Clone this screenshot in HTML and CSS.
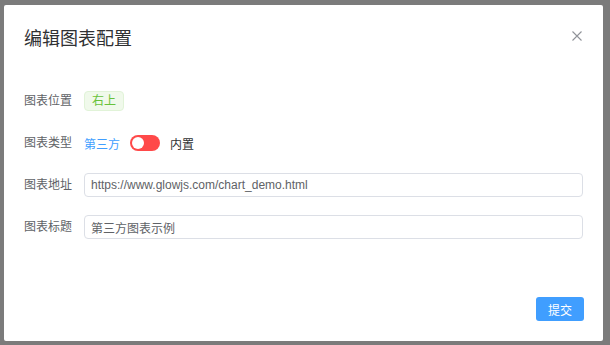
FILE: index.html
```html
<!DOCTYPE html>
<html lang="zh-CN">
<head>
<meta charset="utf-8">
<title>编辑图表配置</title>
<link rel="stylesheet" href="styles.css">
</head>
<body>
<div class="dialog">
  <div class="dialog-header">
    <span class="dialog-title">编辑图表配置</span>
    <span class="dialog-close" aria-label="关闭">
      <svg width="10" height="10" viewBox="0 0 10 10"><path d="M0.5 0.5 L9.5 9.5 M9.5 0.5 L0.5 9.5" stroke="#909399" stroke-width="1.1" fill="none"/></svg>
    </span>
  </div>
  <div class="dialog-body">
    <div class="form-row">
      <label class="form-label">图表位置</label>
      <div class="form-content"><span class="tag tag-success">右上</span></div>
    </div>
    <div class="form-row">
      <label class="form-label">图表类型</label>
      <div class="form-content">
        <span class="switch-label active">第三方</span>
        <span class="switch"><span class="switch-knob"></span></span>
        <span class="switch-label">内置</span>
      </div>
    </div>
    <div class="form-row">
      <label class="form-label">图表地址</label>
      <div class="form-content"><input class="input" type="text" value="https://www.glowjs.com/chart_demo.html"></div>
    </div>
    <div class="form-row">
      <label class="form-label">图表标题</label>
      <div class="form-content"><input class="input" type="text" value="第三方图表示例"></div>
    </div>
  </div>
  <div class="dialog-footer">
    <button class="btn btn-primary">提交</button>
  </div>
</div>
</body>
</html>
```
FILE: styles.css
```css
html, body {
  margin: 0;
  padding: 0;
}
body {
  width: 610px;
  height: 345px;
  overflow: hidden;
  background: #7b7b7b;
  font-family: "Liberation Sans", "Noto Sans CJK SC", sans-serif;
  padding-top: 5px;
  padding-left: 4px;
  box-sizing: border-box;
}
.dialog {
  width: 599px;
  height: 336px;
  background: #fff;
  border-radius: 2px;
  display: flex;
  flex-direction: column;
  box-sizing: border-box;
}
.dialog-header {
  padding: 20px 21px 10px 20px;
  display: flex;
  align-items: center;
  justify-content: space-between;
}
.dialog-title {
  font-size: 18px;
  line-height: 24px;
  color: #303133;
  font-family: "Noto Sans CJK SC", sans-serif;
}
.dialog-close {
  display: flex;
  width: 10px;
  height: 10px;
  margin-top: -2px;
}
.dialog-body {
  padding: 30px 20px 0 20px;
}
.form-row {
  display: flex;
  align-items: center;
  height: 24px;
  margin-bottom: 18px;
}
.form-label {
  width: 60px;
  flex: none;
  font-size: 12px;
  color: #606266;
  line-height: 24px;
}
.form-content {
  flex: 1;
  display: flex;
  align-items: center;
  font-size: 12px;
}
.tag {
  display: inline-block;
  height: 20px;
  line-height: 18px;
  padding: 0 7px;
  border-radius: 4px;
  font-size: 12px;
  box-sizing: border-box;
}
.tag-success {
  background: #f0f9eb;
  border: 1px solid #e1f3d8;
  color: #67c23a;
}
.switch-label {
  font-size: 12px;
  color: #303133;
}
.switch-label.active {
  color: #409eff;
}
.switch {
  position: relative;
  width: 30px;
  height: 16px;
  border-radius: 8px;
  background: #ff4949;
  margin: 0 10px;
  flex: none;
}
.switch-knob {
  position: absolute;
  top: 2px;
  left: 2px;
  width: 12px;
  height: 12px;
  border-radius: 50%;
  background: #fff;
}
.input {
  width: 100%;
  height: 24px;
  box-sizing: border-box;
  border: 1px solid #dcdfe6;
  border-radius: 4px;
  padding: 0 6px;
  font-size: 12px;
  font-family: "Liberation Sans", "Noto Sans CJK SC", sans-serif;
  color: #606266;
  outline: none;
  background: #fff;
}
.dialog-footer {
  margin-top: auto;
  padding: 0 19px 20px 20px;
  display: flex;
  justify-content: flex-end;
}
.btn {
  height: 24px;
  width: 48px;
  border: none;
  border-radius: 3px;
  font-size: 12px;
  font-family: "Noto Sans CJK SC", sans-serif;
  padding: 0;
  cursor: pointer;
}
.btn-primary {
  background: #409eff;
  color: #fff;
}
```
